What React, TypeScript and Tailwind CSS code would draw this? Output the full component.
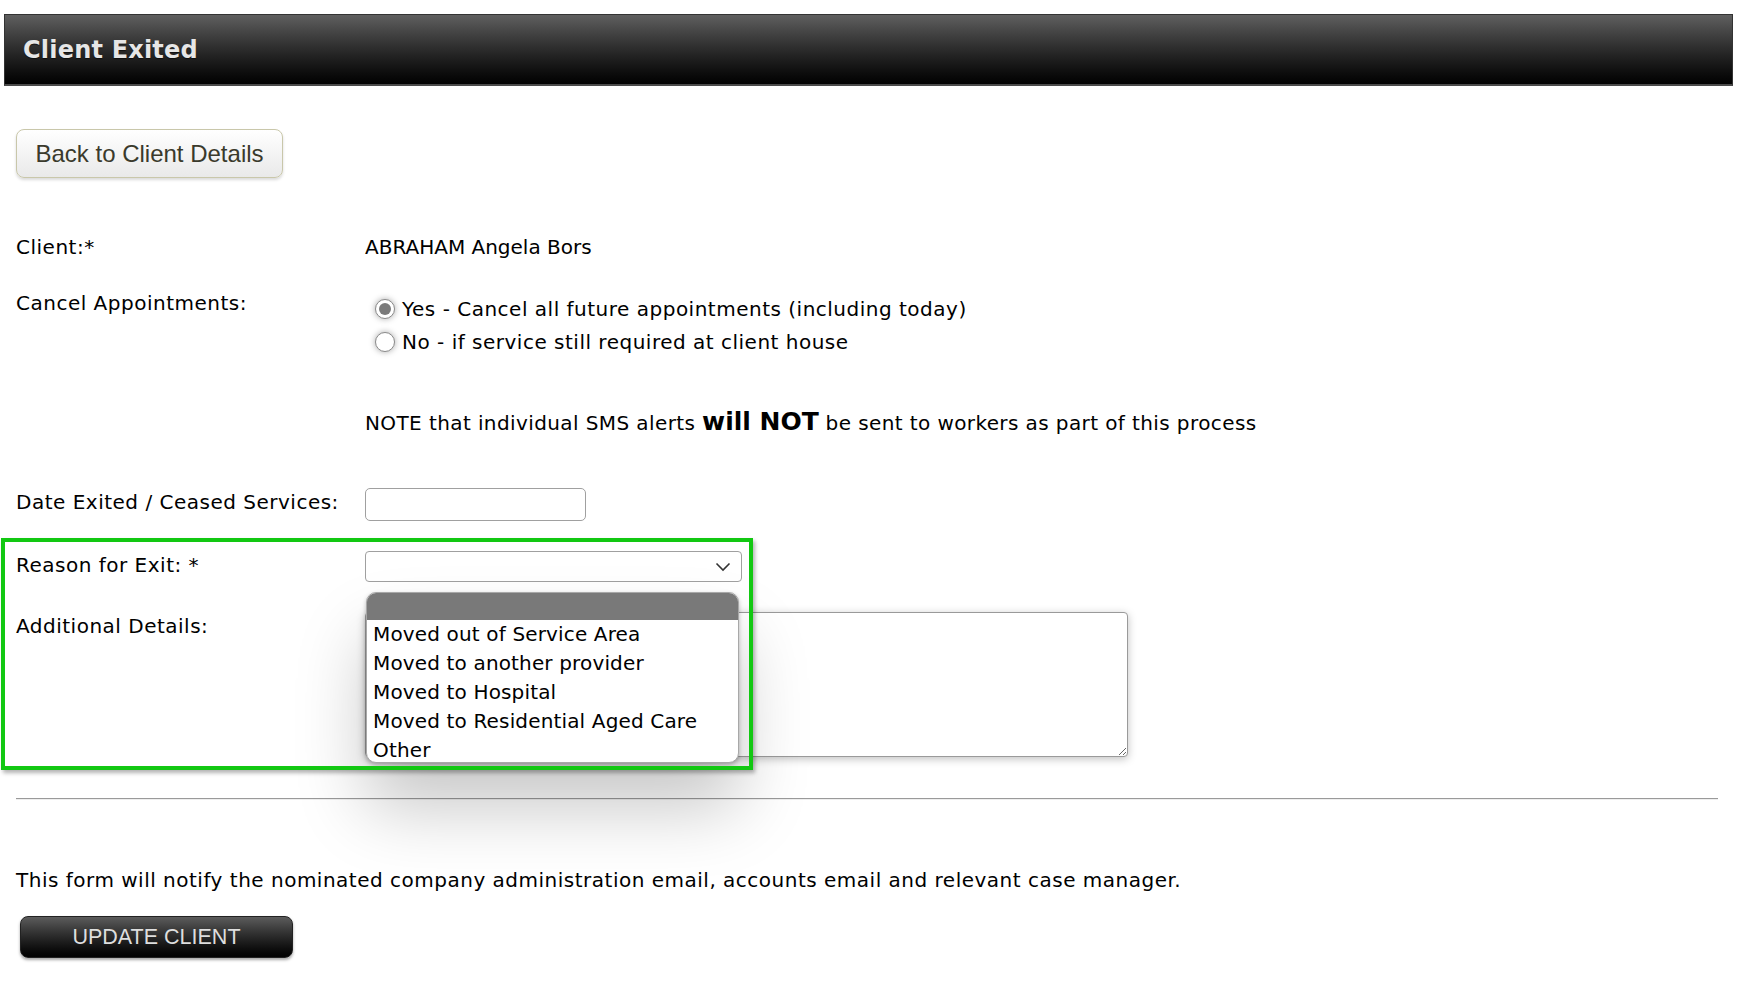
import React from "react";

const options = [
  "Moved out of Service Area",
  "Moved to another provider",
  "Moved to Hospital",
  "Moved to Residential Aged Care",
  "Other",
];

function Radio({ checked }: { checked?: boolean }) {
  return (
    <div className="w-[20px] h-[20px] rounded-full border border-[#8a8a8a] bg-white flex items-center justify-center shadow-[0_0_6px_rgba(0,0,0,0.35)]">
      {checked && <div className="w-[12px] h-[12px] rounded-full bg-[#7a7a7a]" />}
    </div>
  );
}

export default function App() {
  return (
    <div className="relative min-h-[993px] w-[1746px] pt-[14px] bg-white text-black font-['DejaVu_Sans',sans-serif] text-[20px] leading-[24px] tracking-[0.5px]">
      {/* Header */}
      <div className="ml-[4px] w-[1729px] h-[72px] border border-[#333] border-b-[2px] border-b-[#4a4a4a] bg-gradient-to-b from-[#5f5f5f] to-[#030303] flex items-center pl-[18px]">
        <span className="text-[24px] font-bold tracking-[0.2px] text-[#e6e6e6] [text-shadow:0_1px_1px_rgba(0,0,0,0.6)]">
          Client Exited
        </span>
      </div>

      <div className="pl-[16px]">
        {/* Back button */}
        <button className="mt-[43px] w-[267px] h-[49px] rounded-[8px] border border-[#c9c7aa] bg-gradient-to-b from-[#ffffff] to-[#e9e9e9] shadow-[0_2px_3px_rgba(0,0,0,0.15)] font-['Liberation_Sans',Arial,sans-serif] tracking-normal text-[24px] text-[#3a3a2c] flex items-center justify-center">
          Back to Client Details
        </button>

        {/* Client row */}
        <div className="mt-[57px] flex h-[24px]">
          <div className="w-[349px]">Client:*</div>
          <div className="tracking-normal">ABRAHAM Angela Bors</div>
        </div>

        {/* Cancel appointments */}
        <div className="mt-[32px] flex">
          <div className="w-[349px]">Cancel Appointments:</div>
          <div className="mt-[1px] flex flex-col">
            <div className="h-[33px] flex items-center pl-[10px] gap-[7px]">
              <Radio checked />
              <span>Yes - Cancel all future appointments (including today)</span>
            </div>
            <div className="h-[33px] flex items-center pl-[10px] gap-[7px]">
              <Radio />
              <span>No - if service still required at client house</span>
            </div>
          </div>
        </div>

        {/* Note */}
        <div className="mt-[44px] h-[40px] flex items-center">
          <div className="w-[349px]" />
          <div className="flex items-baseline tracking-[0.4px]">
            <span>NOTE that individual SMS alerts&nbsp;</span>
            <span className="font-bold text-[25px] tracking-normal">will NOT</span>
            <span>&nbsp;be sent to workers as part of this process</span>
          </div>
        </div>

        {/* Date exited */}
        <div className="mt-[46px] flex items-start">
          <div className="w-[349px] mt-[2px]">Date Exited / Ceased Services:</div>
          <input
            type="text"
            className="w-[221px] h-[33px] rounded-[5px] border border-[#a0a0a0] bg-white outline-none"
          />
        </div>

        {/* Reason for exit */}
        <div className="mt-[30px] flex items-start">
          <div className="w-[349px] mt-[2px]">Reason for Exit: *</div>
          <div className="relative">
            <div className="w-[377px] h-[31px] rounded-[4px] border border-[#a0a0a0] bg-white flex items-center justify-end pr-[10px]">
              <svg width="16" height="10" viewBox="0 0 16 10">
                <polyline points="1.5,1.5 8,8 14.5,1.5" fill="none" stroke="#333" strokeWidth="1.6" />
              </svg>
            </div>
            {/* Dropdown list */}
            <div className="absolute z-10 left-[1px] top-[41px] w-[373px] h-[171px] rounded-[10px] border border-[#a8a8a8] bg-white overflow-hidden tracking-[0.15px] shadow-[0_45px_70px_rgba(0,0,0,0.22),0_2px_4px_rgba(0,0,0,0.25)]">
              <div className="h-[27px] bg-[#797979]" />
              {options.map((o) => (
                <div key={o} className="h-[28.8px] pl-[6px] flex items-center whitespace-nowrap">
                  {o}
                </div>
              ))}
            </div>
          </div>
        </div>

        {/* Additional details */}
        <div className="mt-[30px] flex items-start">
          <div className="w-[349px] mt-[2px]">Additional Details:</div>
          <textarea className="w-[763px] h-[145px] rounded-[4px] border border-[#9a9a9a] bg-white shadow-[0_2px_8px_rgba(0,0,0,0.25)] outline-none" />
        </div>

        {/* hr */}
        <div className="mt-[41px] w-[1702px] border-t border-t-[#9a9a9a] border-b border-b-[#eeeeee]" />

        <p className="mt-[68px]">
          This form will notify the nominated company administration email, accounts email and relevant case manager.
        </p>

        <button className="mt-[24px] ml-[4px] w-[273px] h-[42px] rounded-[8px] border border-[#222] bg-gradient-to-b from-[#5c5c5c] to-[#020202] shadow-[0_2px_3px_rgba(0,0,0,0.35)] font-['Liberation_Sans',Arial,sans-serif] tracking-normal text-[21.5px] text-[#dedede] flex items-center justify-center">
          UPDATE CLIENT
        </button>
      </div>

      {/* Green annotation box */}
      <div className="pointer-events-none absolute z-20 left-[1px] top-[538px] w-[752px] h-[232px] border-[4px] border-[#12c812] shadow-[2px_3px_4px_rgba(0,0,0,0.3)]" />
    </div>
  );
}
